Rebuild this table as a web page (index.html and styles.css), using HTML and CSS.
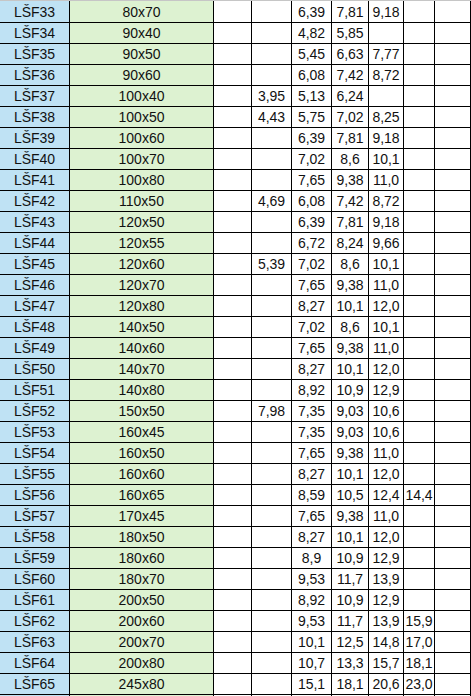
FILE: index.html
```html
<!DOCTYPE html>
<html>
<head>
<meta charset="utf-8">
<link rel="stylesheet" href="styles.css">
</head>
<body>
<div class="sheet">
<div class="row first"><div class="id">LŠF33</div><div class="sz">80x70</div><div></div><div></div><div>6,39</div><div>7,81</div><div>9,18</div><div></div><div></div></div>
<div class="row"><div class="id">LŠF34</div><div class="sz">90x40</div><div></div><div></div><div>4,82</div><div>5,85</div><div></div><div></div><div></div></div>
<div class="row"><div class="id">LŠF35</div><div class="sz">90x50</div><div></div><div></div><div>5,45</div><div>6,63</div><div>7,77</div><div></div><div></div></div>
<div class="row"><div class="id">LŠF36</div><div class="sz">90x60</div><div></div><div></div><div>6,08</div><div>7,42</div><div>8,72</div><div></div><div></div></div>
<div class="row"><div class="id">LŠF37</div><div class="sz">100x40</div><div></div><div>3,95</div><div>5,13</div><div>6,24</div><div></div><div></div><div></div></div>
<div class="row"><div class="id">LŠF38</div><div class="sz">100x50</div><div></div><div>4,43</div><div>5,75</div><div>7,02</div><div>8,25</div><div></div><div></div></div>
<div class="row"><div class="id">LŠF39</div><div class="sz">100x60</div><div></div><div></div><div>6,39</div><div>7,81</div><div>9,18</div><div></div><div></div></div>
<div class="row"><div class="id">LŠF40</div><div class="sz">100x70</div><div></div><div></div><div>7,02</div><div>8,6</div><div>10,1</div><div></div><div></div></div>
<div class="row"><div class="id">LŠF41</div><div class="sz">100x80</div><div></div><div></div><div>7,65</div><div>9,38</div><div>11,0</div><div></div><div></div></div>
<div class="row"><div class="id">LŠF42</div><div class="sz">110x50</div><div></div><div>4,69</div><div>6,08</div><div>7,42</div><div>8,72</div><div></div><div></div></div>
<div class="row"><div class="id">LŠF43</div><div class="sz">120x50</div><div></div><div></div><div>6,39</div><div>7,81</div><div>9,18</div><div></div><div></div></div>
<div class="row"><div class="id">LŠF44</div><div class="sz">120x55</div><div></div><div></div><div>6,72</div><div>8,24</div><div>9,66</div><div></div><div></div></div>
<div class="row"><div class="id">LŠF45</div><div class="sz">120x60</div><div></div><div>5,39</div><div>7,02</div><div>8,6</div><div>10,1</div><div></div><div></div></div>
<div class="row"><div class="id">LŠF46</div><div class="sz">120x70</div><div></div><div></div><div>7,65</div><div>9,38</div><div>11,0</div><div></div><div></div></div>
<div class="row"><div class="id">LŠF47</div><div class="sz">120x80</div><div></div><div></div><div>8,27</div><div>10,1</div><div>12,0</div><div></div><div></div></div>
<div class="row"><div class="id">LŠF48</div><div class="sz">140x50</div><div></div><div></div><div>7,02</div><div>8,6</div><div>10,1</div><div></div><div></div></div>
<div class="row"><div class="id">LŠF49</div><div class="sz">140x60</div><div></div><div></div><div>7,65</div><div>9,38</div><div>11,0</div><div></div><div></div></div>
<div class="row"><div class="id">LŠF50</div><div class="sz">140x70</div><div></div><div></div><div>8,27</div><div>10,1</div><div>12,0</div><div></div><div></div></div>
<div class="row"><div class="id">LŠF51</div><div class="sz">140x80</div><div></div><div></div><div>8,92</div><div>10,9</div><div>12,9</div><div></div><div></div></div>
<div class="row"><div class="id">LŠF52</div><div class="sz">150x50</div><div></div><div>7,98</div><div>7,35</div><div>9,03</div><div>10,6</div><div></div><div></div></div>
<div class="row"><div class="id">LŠF53</div><div class="sz">160x45</div><div></div><div></div><div>7,35</div><div>9,03</div><div>10,6</div><div></div><div></div></div>
<div class="row"><div class="id">LŠF54</div><div class="sz">160x50</div><div></div><div></div><div>7,65</div><div>9,38</div><div>11,0</div><div></div><div></div></div>
<div class="row"><div class="id">LŠF55</div><div class="sz">160x60</div><div></div><div></div><div>8,27</div><div>10,1</div><div>12,0</div><div></div><div></div></div>
<div class="row"><div class="id">LŠF56</div><div class="sz">160x65</div><div></div><div></div><div>8,59</div><div>10,5</div><div>12,4</div><div>14,4</div><div></div></div>
<div class="row"><div class="id">LŠF57</div><div class="sz">170x45</div><div></div><div></div><div>7,65</div><div>9,38</div><div>11,0</div><div></div><div></div></div>
<div class="row"><div class="id">LŠF58</div><div class="sz">180x50</div><div></div><div></div><div>8,27</div><div>10,1</div><div>12,0</div><div></div><div></div></div>
<div class="row"><div class="id">LŠF59</div><div class="sz">180x60</div><div></div><div></div><div>8,9</div><div>10,9</div><div>12,9</div><div></div><div></div></div>
<div class="row"><div class="id">LŠF60</div><div class="sz">180x70</div><div></div><div></div><div>9,53</div><div>11,7</div><div>13,9</div><div></div><div></div></div>
<div class="row"><div class="id">LŠF61</div><div class="sz">200x50</div><div></div><div></div><div>8,92</div><div>10,9</div><div>12,9</div><div></div><div></div></div>
<div class="row"><div class="id">LŠF62</div><div class="sz">200x60</div><div></div><div></div><div>9,53</div><div>11,7</div><div>13,9</div><div>15,9</div><div></div></div>
<div class="row"><div class="id">LŠF63</div><div class="sz">200x70</div><div></div><div></div><div>10,1</div><div>12,5</div><div>14,8</div><div>17,0</div><div></div></div>
<div class="row"><div class="id">LŠF64</div><div class="sz">200x80</div><div></div><div></div><div>10,7</div><div>13,3</div><div>15,7</div><div>18,1</div><div></div></div>
<div class="row"><div class="id">LŠF65</div><div class="sz">245x80</div><div></div><div></div><div>15,1</div><div>18,1</div><div>20,6</div><div>23,0</div><div></div></div>
<div class="row"><div class="id"></div><div class="sz"></div><div></div><div></div><div></div><div></div><div></div><div></div><div></div></div>
</div>
</body>
</html>
```
FILE: styles.css
```css
html, body {
  margin: 0;
  padding: 0;
  background: #fff;
  overflow: hidden;
}
.sheet {
  width: 471px;
  height: 696px;
  overflow: hidden;
  box-sizing: border-box;
  border-top: 1px solid #c6c6c6;
  background: #000;
  display: flex;
  flex-direction: column;
  gap: 1px;
  padding-right: 1px;
}
.row {
  display: grid;
  grid-template-columns: 69px 143px 37px 39px 39px 36px 34px 30px 35px;
  column-gap: 1px;
  height: 20px;
  flex: none;
}
.row > div {
  background: #fff;
  font-family: "Liberation Sans", Arial, sans-serif;
  font-size: 14px;
  line-height: 20px;
  color: #111;
  text-align: center;
  white-space: nowrap;
  overflow: hidden;
}
.row > .id {
  background: #bfe2f4;
}
.row > .sz {
  background: #ddf2d1;
}
.row.first {
  height: 21px;
}
.row.first > div {
  padding-top: 1px;
}
```
